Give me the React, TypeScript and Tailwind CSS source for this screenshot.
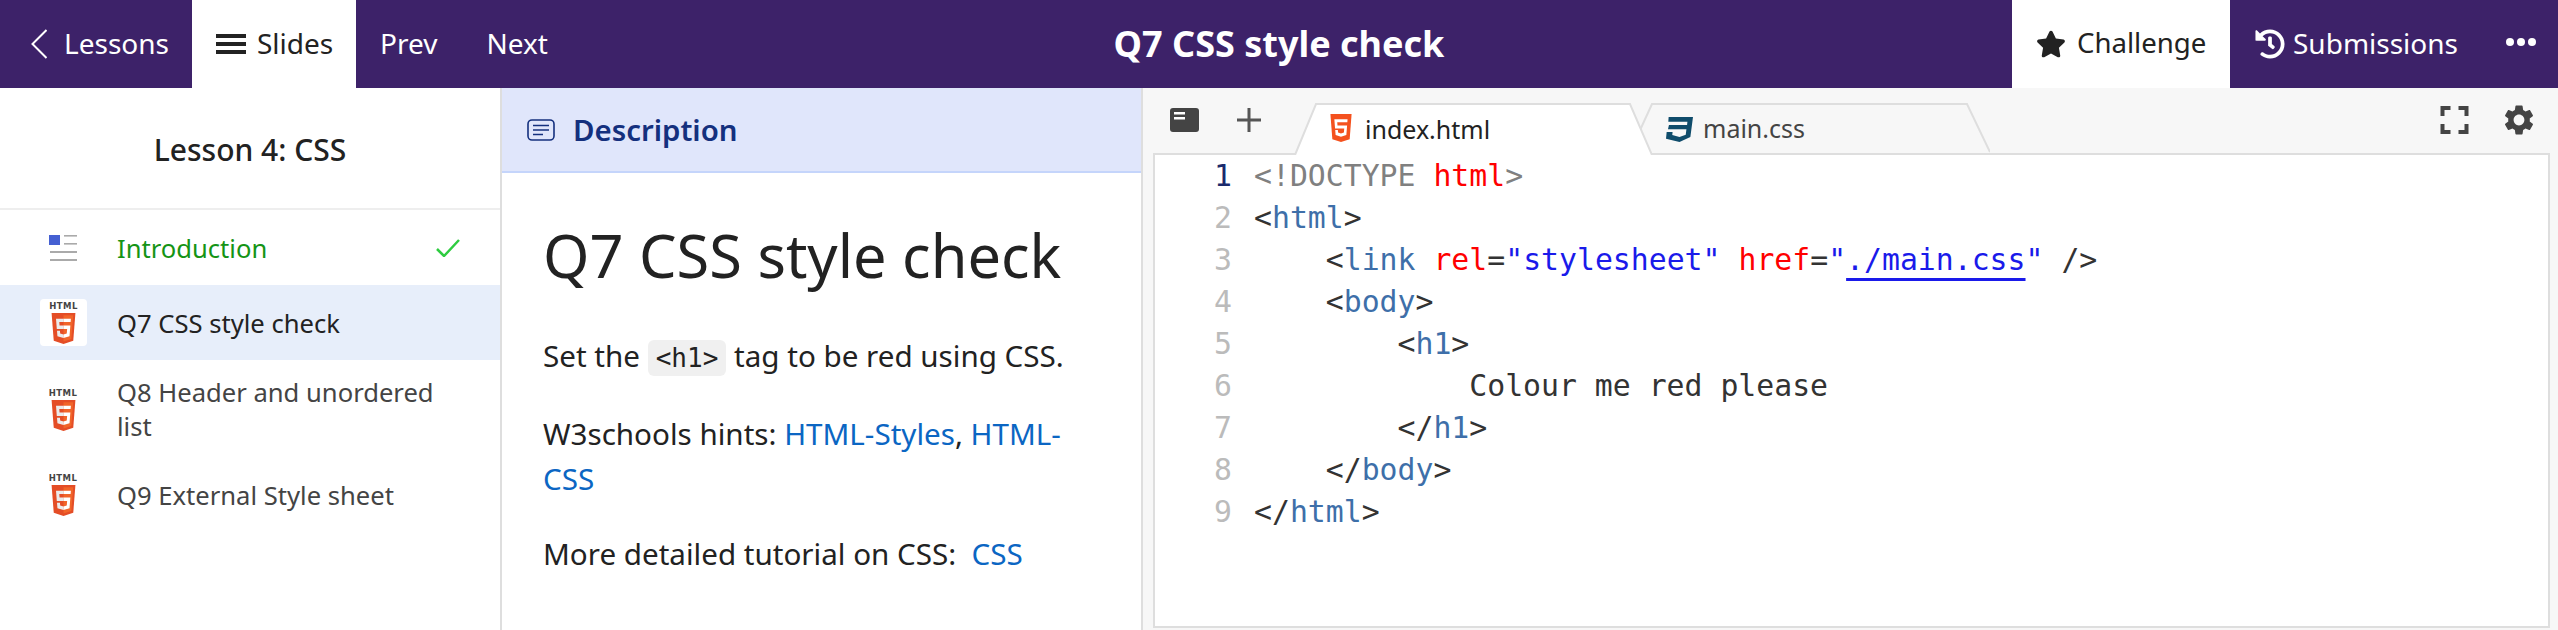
import { FaHistory, FaStar } from "react-icons/fa";

function Html5({ className, flat }: { className: string; flat?: boolean }) {
  return (
    <svg viewBox="0 0 512 512" preserveAspectRatio="none" className={className}>
      <path fill={flat ? "#f4511e" : "#E44D26"} d="M71 460 30 0h452l-41 460-185 52z" />
      <path fill={flat ? "#f4511e" : "#F16529"} d="M256 472l149-41 35-394H256z" />
      <path fill={flat ? "#FFF" : "#EBEBEB"} d="M256 208h-75l-5-58h80V94H114l15 171h127zM256 355l-63-17-4-45h-56l8 89 115 32z" />
      <path fill="#FFF" d="M255 208v57h70l-7 73-63 17v59l115-32 16-174zM255 94v56h136l5-56z" />
    </svg>
  );
}

function HtmlBadge() {
  return (
    <div className="flex w-[28px] flex-col items-center">
      <span className="font-['DejaVu_Sans'] text-[8.5px] leading-[9px] font-bold tracking-[0.4px] text-[#444]">HTML</span>
      <Html5 className="mt-[2px] h-[31px] w-[27px]" />
    </div>
  );
}

function Header() {
  return (
    <header className="grid h-[88px] grid-cols-[1fr_auto_1fr] items-stretch bg-[#3d2269] text-[28px] text-white">
      <div className="flex items-stretch">
        <div className="flex w-[192px] items-center pl-[31px]">
          <svg viewBox="0 0 16 30" className="h-[30px] w-[16px]" fill="none" stroke="white" strokeWidth="2">
            <path d="M15.5 1 1.5 15l14 14" />
          </svg>
          <span className="ml-[17px] pb-[2px]">Lessons</span>
        </div>
        <div className="flex w-[164px] items-center bg-white pl-[24px]">
          <div className="flex h-[20px] w-[30px] flex-col justify-between">
            <div className="h-[4px] bg-[#222]" />
            <div className="h-[4px] bg-[#222]" />
            <div className="h-[4px] bg-[#222]" />
          </div>
          <span className="ml-[11px] pb-[2px] text-[#222]">Slides</span>
        </div>
        <div className="ml-[24px] flex items-center gap-[49px] pb-[2px]">
          <span>Prev</span>
          <span>Next</span>
        </div>
      </div>
      <div className="flex items-center text-[36px] font-bold">Q7 CSS style check</div>
      <div className="flex items-stretch justify-end">
        <div className="flex w-[218px] items-center bg-white pl-[24px] text-[#222]">
          <FaStar className="h-[30px] w-[30px]" />
          <span className="ml-[11px] pb-[2px] text-[27.6px]">Challenge</span>
        </div>
        <div className="flex items-center pl-[25px]">
          <FaHistory className="h-[30px] w-[30px]" />
          <span className="ml-[8px] pb-[2px]">Submissions</span>
        </div>
        <div className="ml-[48px] mr-[22px] flex items-center gap-[3px] pb-[4px]">
          <div className="h-[8px] w-[8px] rounded-full bg-white" />
          <div className="h-[8px] w-[8px] rounded-full bg-white" />
          <div className="h-[8px] w-[8px] rounded-full bg-white" />
        </div>
      </div>
    </header>
  );
}

function IntroIcon() {
  return (
    <svg viewBox="0 0 28 26" className="h-[26px] w-[28px]">
      <rect x="0" y="0" width="11" height="10" fill="#4560d2" />
      <rect x="15" y="0" width="13" height="1.6" fill="#aaa" />
      <rect x="15" y="8" width="13" height="1.6" fill="#aaa" />
      <rect x="1" y="16" width="27" height="2" fill="#aaa" />
      <rect x="1" y="24" width="27" height="2" fill="#aaa" />
    </svg>
  );
}

function Sidebar() {
  return (
    <aside className="flex w-[502px] flex-none flex-col border-r-2 border-[#dedede] bg-white">
      <div className="flex h-[122px] flex-none items-center justify-center border-b-2 border-[#eeeeee] pt-[2px] text-[30px] font-medium text-[#222]">
        Lesson 4: CSS
      </div>
      <div className="flex h-[75px] items-center text-[25.6px] text-[#159415]">
        <div className="ml-[49px] w-[68px]"><IntroIcon /></div>
        <span className="flex-1 pt-[4px]">Introduction</span>
        <svg viewBox="0 0 24 18" fill="none" stroke="#2ecc40" strokeWidth="2.5" className="mr-[40px] h-[18px] w-[24px]">
          <path d="M1 10l7 7L23 1" />
        </svg>
      </div>
      <div className="flex h-[75px] items-center bg-[#e7eefa] text-[25.6px] text-[#222]">
        <div className="ml-[40px] flex h-[47px] w-[47px] items-center justify-center rounded-[4px] bg-white"><HtmlBadge /></div>
        <span className="ml-[30px] pt-[4px]">Q7 CSS style check</span>
      </div>
      <div className="flex h-[98px] items-center pt-[2px] text-[25.6px] leading-[34px] text-[#444]">
        <div className="ml-[49px] w-[68px] flex-none"><HtmlBadge /></div>
        <span className="w-[330px]">Q8 Header and unordered list</span>
      </div>
      <div className="flex h-[74px] items-center text-[25.6px] text-[#444]">
        <div className="ml-[49px] w-[68px] flex-none"><HtmlBadge /></div>
        <span className="pt-[2px]">Q9 External Style sheet</span>
      </div>
    </aside>
  );
}

function Description() {
  return (
    <section className="flex w-[641px] flex-none flex-col border-r-2 border-[#dedede] bg-white">
      <div className="flex h-[85px] flex-none items-center border-b-2 border-[#c5d5fb] bg-[#e0e6fb] pl-[25px] text-[29.4px] font-semibold text-[#14307e]">
        <svg viewBox="0 0 28 22" fill="none" stroke="#14307e" strokeWidth="1.6" className="h-[22px] w-[28px]">
          <rect x="1" y="1" width="26" height="20" rx="4" />
          <path d="M6 6.5h16M6 11h16M6 15.5h10" />
        </svg>
        <span className="ml-[18px] pt-[2px]">Description</span>
      </div>
      <div className="px-[41px] text-[29.6px] text-[#222]">
        <h1 className="mt-[46px] text-[59.5px] leading-[72px]">Q7 CSS style check</h1>
        <p className="mt-[42px] leading-[45px]">
          Set the{" "}
          <code className="rounded-[6px] bg-[#f0f0f0] px-[8px] py-[3px] font-['DejaVu_Sans_Mono'] text-[26px]">&lt;h1&gt;</code>{" "}
          tag to be red using CSS.
        </p>
        <p className="mt-[30px] leading-[45px]">
          W3schools hints: <span className="text-[#0b66c3]">HTML-Styles</span>, <span className="text-[#0b66c3]">HTML-</span><wbr /><span className="text-[#0b66c3]">CSS</span>
        </p>
        <p className="mt-[30px] leading-[45px]">
          More detailed tutorial on CSS:&nbsp; <span className="text-[#0b66c3]">CSS</span>
        </p>
      </div>
    </section>
  );
}

function Tag({ children }: { children: string }) {
  return <span className="text-[#3e6fa9]">{children}</span>;
}

const lines = [
  <><span className="text-[#808080]">&lt;!DOCTYPE </span><span className="text-[#f00]">html</span><span className="text-[#808080]">&gt;</span></>,
  <>&lt;<Tag>html</Tag>&gt;</>,
  <>    &lt;<Tag>link</Tag> <span className="text-[#f00]">rel</span>=<span className="text-[#1a1aea]">"stylesheet"</span> <span className="text-[#f00]">href</span>=<span className="text-[#1a1aea]">"<span className="underline decoration-[3px] underline-offset-[8px]">./main.css</span>"</span> /&gt;</>,
  <>    &lt;<Tag>body</Tag>&gt;</>,
  <>        &lt;<Tag>h1</Tag>&gt;</>,
  <>            Colour me red please</>,
  <>        &lt;/<Tag>h1</Tag>&gt;</>,
  <>    &lt;/<Tag>body</Tag>&gt;</>,
  <>&lt;/<Tag>html</Tag>&gt;</>,
];

function Editor() {
  return (
    <section className="flex min-w-0 flex-1 flex-col bg-[#f7f7f7] pr-[8px] pb-[2px] pl-[10px]">
      <div className="flex h-[65px] flex-none items-end">
        <div className="flex h-[50px] w-[141px] flex-none items-start pt-[5px]">
          <svg viewBox="0 0 29 24" className="ml-[17px] h-[24px] w-[29px]">
            <rect width="29" height="24" rx="3" fill="#444" />
            <rect x="4" y="4" width="11" height="2.5" fill="#fff" />
            <rect x="4" y="9" width="11" height="2.5" fill="#fff" />
          </svg>
          <svg viewBox="0 0 24 24" className="ml-[38px] h-[24px] w-[24px]" fill="none" stroke="#555" strokeWidth="3">
            <path d="M12 0v24M0 12h24" />
          </svg>
        </div>
        <div className="relative z-10 -mb-[2px] flex h-[52px] w-[358px] flex-none items-center pl-[35px] text-[25px] text-[#222]">
          <svg viewBox="0 0 358 50" preserveAspectRatio="none" className="absolute inset-0 h-full w-full">
            <path d="M1 50 22 1H336L358 50" fill="#fff" stroke="#dedede" strokeWidth="2" />
          </svg>
          <Html5 flat className="relative mb-[2px] h-[28px] w-[24px]" />
          <span className="relative ml-[12px] pt-[2px]">index.html</span>
        </div>
        <div className="relative -ml-[22px] flex h-[50px] w-[360px] flex-none items-center pl-[36px] text-[25px] text-[#444]">
          <svg viewBox="0 0 360 50" preserveAspectRatio="none" className="absolute inset-0 h-full w-full">
            <path d="M0 49 22 1H337L360 49" fill="#f7f7f7" stroke="#dedede" strokeWidth="2" />
          </svg>
          <svg viewBox="0 0 82 75" preserveAspectRatio="none" className="relative mt-[3px] h-[25px] w-[27px]">
            <path fill="#0f4c6b" d="M8 0H82L74 60 41 75 0 65 2 45H20L19 54 41 60 60 53 62 37H6L9 24H64L65 14H7Z" />
          </svg>
          <span className="relative ml-[10px] pt-[2px]">main.css</span>
        </div>
        <div className="flex h-[50px] flex-1 items-start justify-end pt-[3px]">
          <svg viewBox="0 0 28 28" className="h-[28px] w-[29px]" fill="#444">
            <path d="M0 0h10v4H4v6H0zM18 0h10v10h-4V4h-6zM0 18h4v6h6v4H0zM24 18h4v10H18v-4h6z" />
          </svg>
          <svg viewBox="0 0 24 24" className="-mt-[4px] mr-[13px] ml-[32px] h-[36px] w-[36px]" fill="#444">
            <path d="M19.14 12.94c.04-.3.06-.61.06-.94 0-.32-.02-.64-.07-.94l2.03-1.58c.18-.14.23-.41.12-.61l-1.92-3.32c-.12-.22-.37-.29-.59-.22l-2.39.96c-.5-.38-1.03-.7-1.62-.94l-.36-2.54c-.04-.24-.24-.41-.48-.41h-3.84c-.24 0-.43.17-.47.41l-.36 2.54c-.59.24-1.13.57-1.62.94l-2.39-.96c-.22-.08-.47 0-.59.22L2.74 8.87c-.12.21-.08.47.12.61l2.03 1.58c-.05.3-.09.63-.09.94s.02.64.07.94l-2.03 1.58c-.18.14-.23.41-.12.61l1.92 3.32c.12.22.37.29.59.22l2.39-.96c.5.38 1.03.7 1.62.94l.36 2.54c.05.24.24.41.48.41h3.84c.24 0 .44-.17.47-.41l.36-2.54c.59-.24 1.13-.56 1.62-.94l2.39.96c.22.08.47 0 .59-.22l1.92-3.32c.12-.22.07-.47-.12-.61l-2.01-1.58zM12 15.6c-1.98 0-3.6-1.62-3.6-3.6s1.62-3.6 3.6-3.6 3.6 1.62 3.6 3.6-1.62 3.6-3.6 3.6z" />
          </svg>
        </div>
      </div>
      <div className="flex-1 border-2 border-[#dedede] bg-white font-['DejaVu_Sans_Mono'] text-[29.8px] leading-[42px] text-[#333]">
        {lines.map((line, i) => (
          <div key={i} className="flex whitespace-pre">
            <span className={`w-[77px] flex-none text-right ${i === 0 ? "text-[#1a2a6c]" : "text-[#bbb]"}`}>{i + 1}</span>
            <span className="ml-[22px]">{line}</span>
          </div>
        ))}
      </div>
    </section>
  );
}

export default function App() {
  return (
    <div className="flex h-[630px] w-full flex-col overflow-hidden bg-white font-['Noto_Sans',sans-serif]">
      <Header />
      <main className="flex min-h-0 flex-1">
        <Sidebar />
        <Description />
        <Editor />
      </main>
    </div>
  );
}
